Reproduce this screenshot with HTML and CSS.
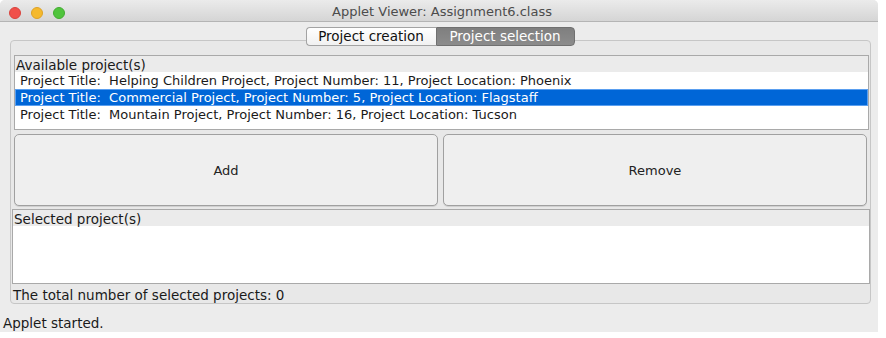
FILE: index.html
```html
<!DOCTYPE html>
<html>
<head>
<meta charset="utf-8">
<link rel="stylesheet" href="styles.css">
</head>
<body>
<div class="window">
  <div class="titlebar">
    <div class="lights">
      <span class="light red"></span>
      <span class="light yellow"></span>
      <span class="light green"></span>
    </div>
    <div class="title">Applet Viewer: Assignment6.class</div>
  </div>
  <div class="content">
    <div class="tabs">
      <div class="tab">Project creation</div>
      <div class="tab active">Project selection</div>
    </div>
    <div class="pane">
      <div class="listbox">
        <div class="header">Available project(s)</div>
        <div class="row">Project Title:&nbsp; Helping Children Project, Project Number: 11, Project Location: Phoenix</div>
        <div class="row selected">Project Title:&nbsp; Commercial Project, Project Number: 5, Project Location: Flagstaff</div>
        <div class="row">Project Title:&nbsp; Mountain Project, Project Number: 16, Project Location: Tucson</div>
      </div>
      <div class="buttons">
        <div class="btn">Add</div>
        <div class="btn">Remove</div>
      </div>
      <div class="listbox selbox">
        <div class="header">Selected project(s)</div>
      </div>
      <div class="total">The total number of selected projects: 0</div>
    </div>
    <div class="status">Applet started.</div>
  </div>
</div>
</body>
</html>
```
FILE: styles.css
```css
html, body {
  margin: 0;
  padding: 0;
  background: #ffffff;
}
body {
  font-family: "DejaVu Sans", "Liberation Sans", sans-serif;
  font-size: 12px;
  color: #1a1a1a;
}
.window {
  width: 878px;
  height: 332px;
  background: #ececec;
  display: flex;
  flex-direction: column;
  border-top-left-radius: 5px;
  border-top-right-radius: 5px;
  overflow: hidden;
}
.titlebar {
  height: 22px;
  flex: none;
  background: linear-gradient(#ebebeb, #d5d5d5);
  border-bottom: 1px solid #b4b4b4;
  box-sizing: border-box;
  display: flex;
  align-items: center;
  position: relative;
}
.lights {
  display: flex;
  gap: 10px;
  padding-left: 9px;
  padding-top: 4px;
}
.light {
  width: 12px;
  height: 12px;
  border-radius: 50%;
  display: block;
}
.red { background: #f0504a; border: 0.5px solid #d9433d; box-sizing: border-box; }
.yellow { background: #f5b92d; border: 0.5px solid #dea226; box-sizing: border-box; }
.green { background: #50c43d; border: 0.5px solid #42ad30; box-sizing: border-box; }
.title {
  position: absolute;
  left: 0;
  right: 0;
  top: 4px;
  text-align: center;
  font-family: "DejaVu Sans", sans-serif;
  font-size: 13px;
  color: #4c4c4c;
  padding-left: 6px;
}
.content {
  flex: 1;
  display: flex;
  flex-direction: column;
}
.tabs {
  display: flex;
  justify-content: center;
  margin-top: 5px;
  margin-bottom: -6px;
  position: relative;
  z-index: 1;
  padding-left: 2px;
}
.tab {
  height: 19px;
  box-sizing: border-box;
  border: 1px solid #a3a3a3;
  background: linear-gradient(#ffffff, #f1f1f1);
  font-size: 13.5px;
  line-height: 17px;
  padding: 0 10px;
  color: #111;
}
.tab:first-child {
  border-radius: 4px 0 0 4px;
  width: 130px;
  text-align: center;
  padding: 0;
  border-right: none;
}
.tab.active {
  border-radius: 0 4px 4px 0;
  background: linear-gradient(#7f7f7f, #8c8c8c);
  border-color: #707070;
  color: #ffffff;
  width: 139px;
  text-align: center;
  padding: 0;
}
.pane {
  margin-left: 10px;
  width: 861px;
  box-sizing: border-box;
  height: 264px;
  border: 1px solid #c6c6c6;
  border-radius: 4px;
  background: #e8e8e8;
  padding: 14px 2px 0 2px;
  display: flex;
  flex-direction: column;
}
.listbox {
  margin-left: 1px;
  width: 855px;
  height: 75px;
  box-sizing: border-box;
  border: 1px solid #a9a9a9;
  background: #ffffff;
}
.header {
  background: #ebebeb;
  height: 16px;
  line-height: 18px;
  padding-left: 1px;
  font-size: 13.5px;
}
.row {
  height: 17px;
  line-height: 17px;
  padding-left: 5px;
  font-size: 13px;
  white-space: nowrap;
}
.row.selected {
  background: #0066d7;
  color: #ffffff;
  border: 1px solid #5a9ff0;
  height: 15px;
  line-height: 15px;
  padding-left: 4px;
}
.buttons {
  display: flex;
  gap: 5px;
  margin-top: 4px;
  margin-left: 1px;
  width: 853px;
}
.btn {
  flex: 1;
  height: 72px;
  box-sizing: border-box;
  border: 1px solid #a0a0a0;
  border-radius: 5px;
  background: #efefef;
  display: flex;
  align-items: center;
  justify-content: center;
  font-size: 13px;
  color: #222;
  box-shadow: 0 1px 0 #d0d0d0;
}
.selbox {
  margin-top: 3px;
  margin-left: -1px;
  width: 858px;
  height: 75px;
}
.total {
  margin-top: 3px;
  font-size: 13.5px;
  padding-left: 0;
}
.status {
  margin-top: 11px;
  padding-left: 3px;
  font-size: 13.5px;
}
```
